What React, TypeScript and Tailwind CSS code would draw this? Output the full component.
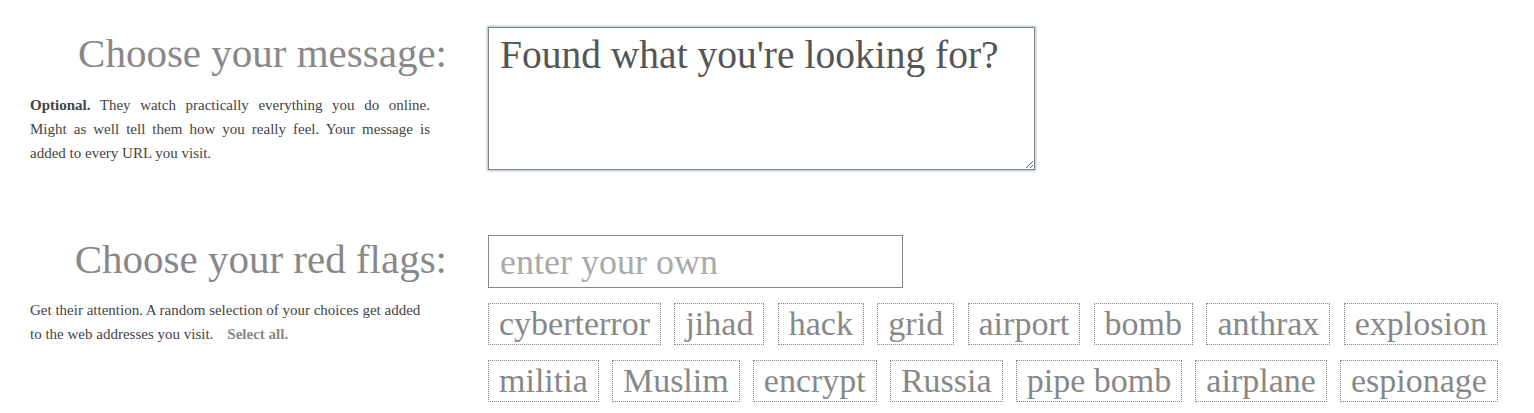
const flagRows = [
  ["cyberterror", "jihad", "hack", "grid", "airport", "bomb", "anthrax", "explosion"],
  ["militia", "Muslim", "encrypt", "Russia", "pipe bomb", "airplane", "espionage"],
];

const App = () => {
  return (
    <div className="min-h-screen bg-white pl-[30px] pt-[27px] font-['Liberation_Serif',serif]">
      {/* message */}
      <div className="flex">
        <div className="w-[417px] shrink-0">
          <h2 className="mt-[4px] text-right text-[41px] leading-[44px] text-[#888]">
            Choose your message:
          </h2>
          <div className="mt-[18px] w-[400px] text-[15px] leading-6 text-[#444]">
            <p className="[text-align-last:justify]">
              <b>Optional.</b> They watch practically everything you do online.
            </p>
            <p className="[text-align-last:justify]">
              Might as well tell them how you really feel. Your message is
            </p>
            <p>added to every URL you visit.</p>
          </div>
        </div>
        <div className="ml-[41px]">
          <textarea
            defaultValue="Found what you're looking for?"
            className="block h-[143px] w-[547px] border border-[#7b8590] px-[11px] py-[5px] text-[39.5px] leading-[44px] text-[#555] shadow-[0_0_2px_1px_rgba(120,135,150,0.55)] outline-none"
          />
        </div>
      </div>

      {/* red flags */}
      <div className="mt-[65px] flex">
        <div className="w-[417px] shrink-0">
          <h2 className="mt-[2px] text-right text-[41px] leading-[44px] text-[#888]">
            Choose your red flags:
          </h2>
          <div className="mt-[17px] w-[400px] text-[15px] leading-6 text-[#444]">
            <p>Get their attention. A random selection of your choices get added</p>
            <p>
              to the web addresses you visit.
              <b className="ml-[14px] text-[#888]">Select all.</b>
            </p>
          </div>
        </div>
        <div className="ml-[41px] w-[1010px]">
          <input
            placeholder="enter your own"
            className="block h-[53px] w-[415px] border border-[#888] px-[11px] text-[36px] text-[#555] outline-none placeholder:text-[#aaa]"
          />
          <div className="mt-[15px] flex flex-col gap-[15px]">
            {flagRows.map((row, i) => (
              <div key={i} className="flex justify-between">
                {row.map((f) => (
                  <span
                    key={f}
                    className="h-[42px] border border-dotted border-[#888] px-[10px] text-[34px] leading-[40px] text-[#888]"
                  >
                    {f}
                  </span>
                ))}
              </div>
            ))}
          </div>
        </div>
      </div>
    </div>
  );
};

export default App;
